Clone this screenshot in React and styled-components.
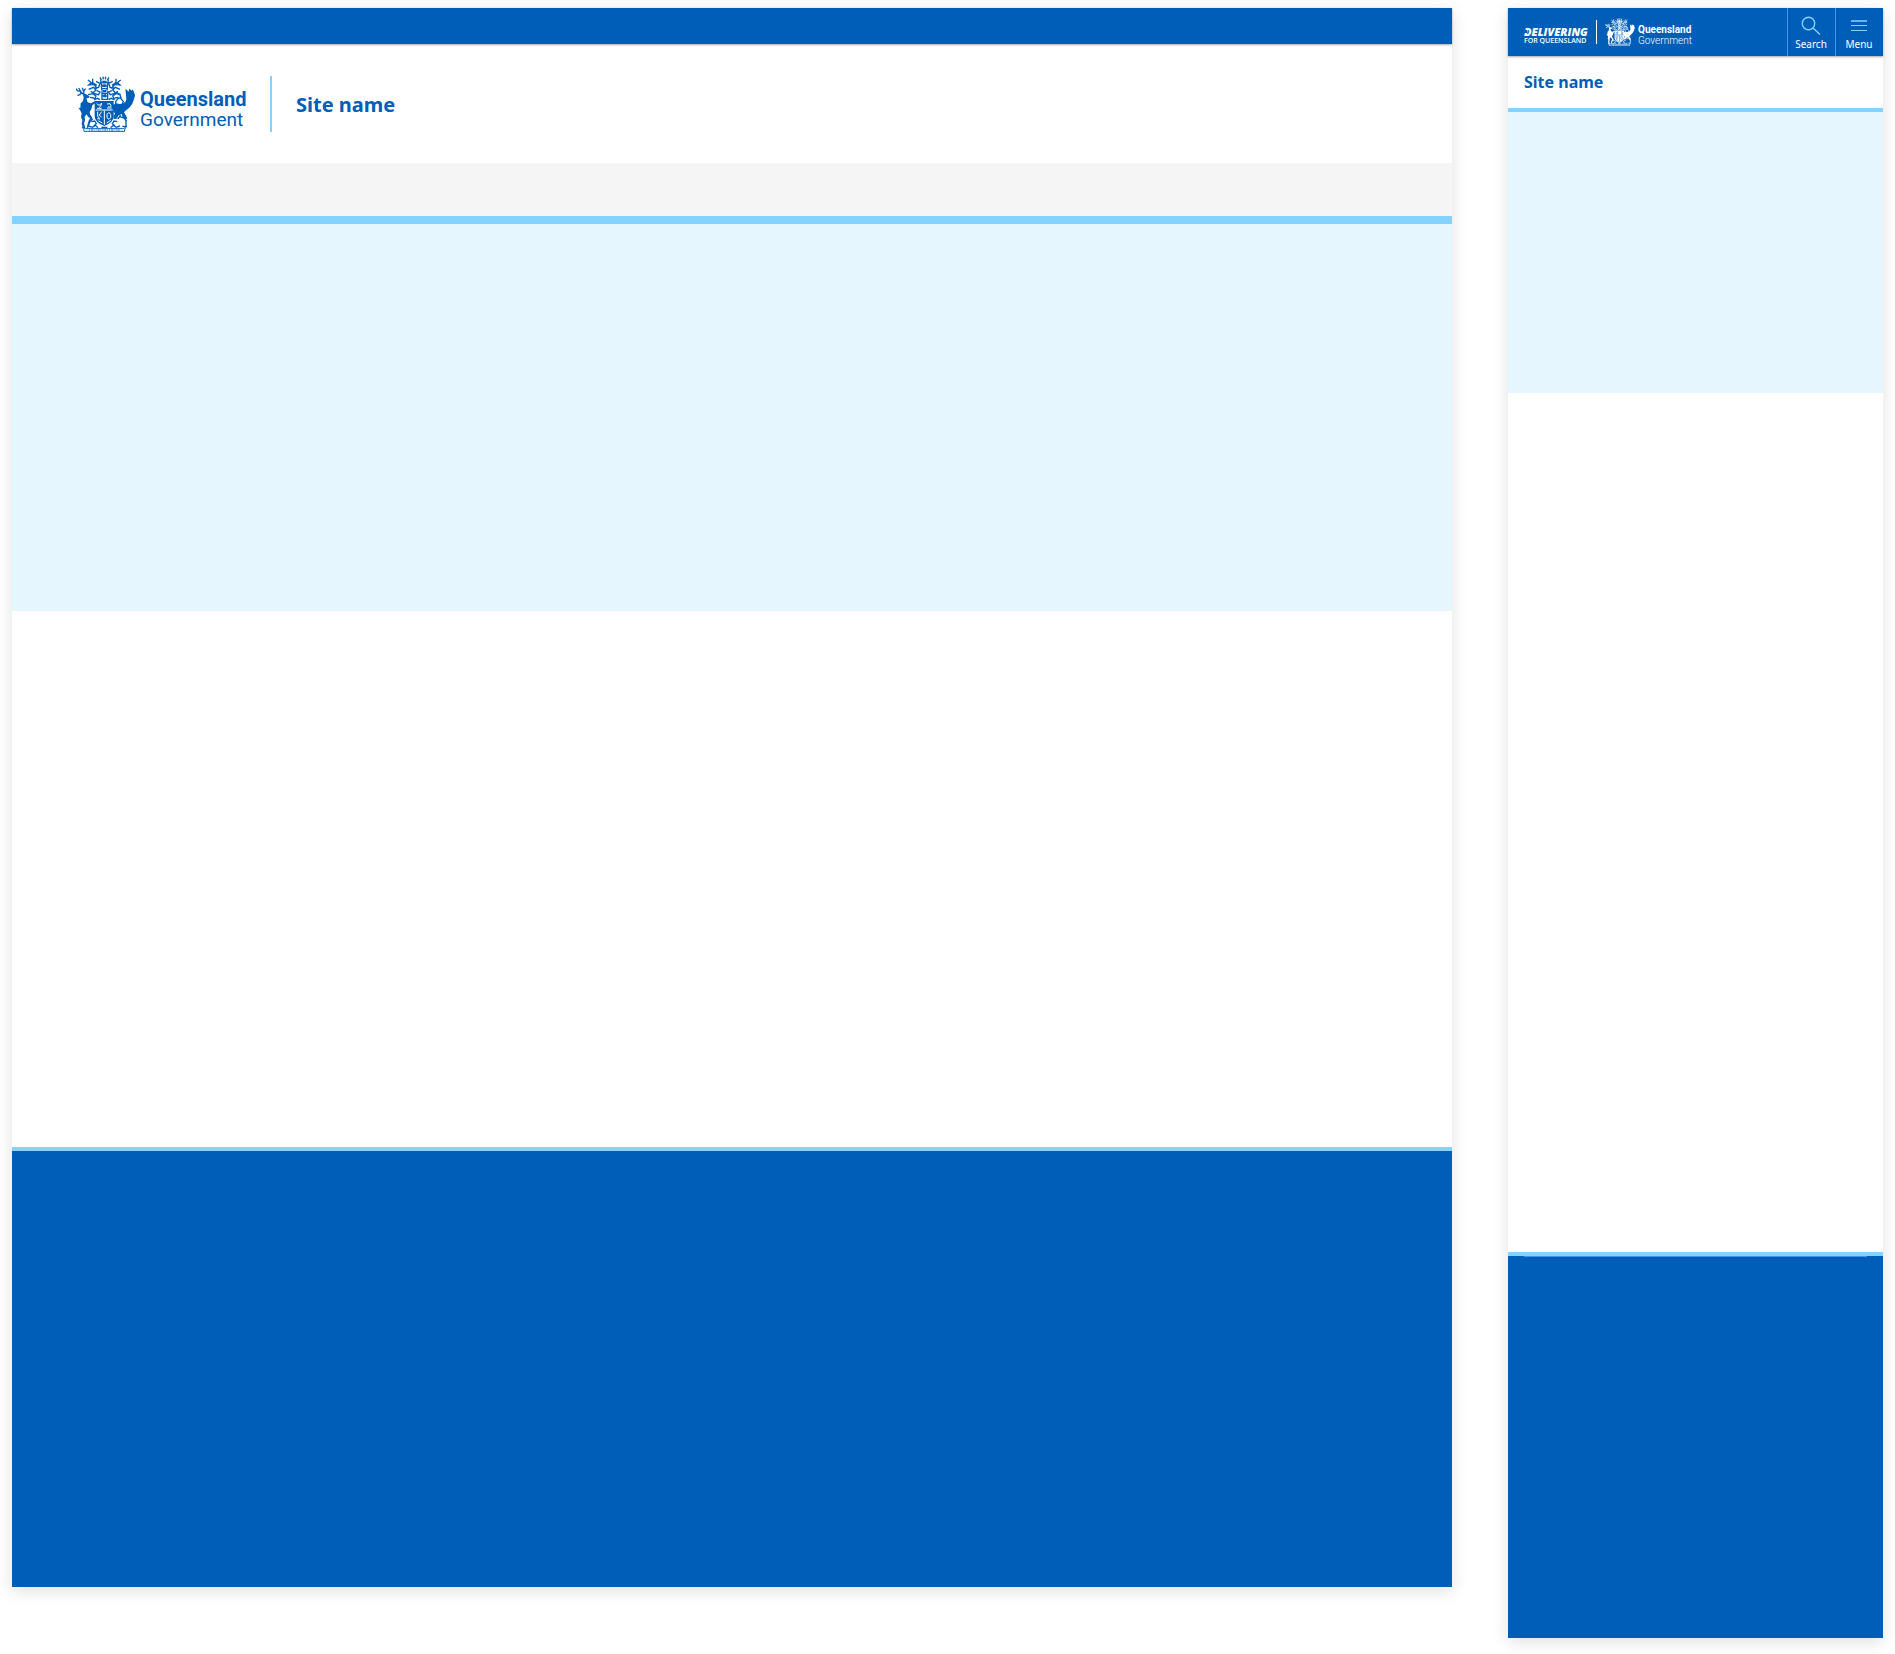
import React from 'react';
import styled, { createGlobalStyle, ThemeProvider } from 'styled-components';

const theme = {
  blue: '#005eb8',
  sky: '#84d3ff',
  tint: '#e5f6ff',
  grey: '#f5f5f5',
  line: '#4094f0',
};

const GlobalStyle = createGlobalStyle`
  * {
    box-sizing: border-box;
  }
  body {
    margin: 0;
    background: #fff;
    font-family: 'Noto Sans', 'Open Sans', sans-serif;
  }
`;

const Board = styled.div`
  display: flex;
  align-items: flex-start;
  gap: 56px;
  padding: 8px 12px 16px;
`;

const Page = styled.section`
  min-width: 0;
  flex: ${({ $mobile }) => ($mobile ? '0 0 375px' : '1 1 0')};
  background: #fff;
  box-shadow: 0 4px 16px rgba(0, 0, 0, 0.12);
`;

const TopBar = styled.div`
  position: relative;
  display: flex;
  height: ${({ $tall }) => ($tall ? '48px' : '36px')};
  background: ${({ theme }) => theme.blue};
  box-shadow: 0 1px 2px rgba(0, 0, 0, 0.35);
`;

const Header = styled.header`
  display: flex;
  align-items: center;
  padding: 32px 64px 31px;
`;

const MobileHeader = styled.header`
  padding: 14px 16px;
`;

const Logo = styled.a`
  display: flex;
  flex: none;
  width: ${({ $small }) => ($small ? '86px' : '170px')};
  color: ${({ $small, theme }) => ($small ? '#fff' : theme.blue)};
  text-decoration: none;
`;

const CrestSvg = styled.svg`
  display: block;
  flex: none;
  width: ${({ $small }) => ($small ? '30px' : '59px')};
  height: ${({ $small }) => ($small ? '28px' : '56px')};
`;

const Wordmark = styled.span`
  display: flex;
  flex-direction: column;
  font-family: Roboto, 'Open Sans', sans-serif;
  font-size: ${({ $small }) => ($small ? '10px' : '20px')};
  line-height: ${({ $small }) => ($small ? '11px' : '21px')};
  padding-top: ${({ $small }) => ($small ? '6px' : '13px')};
  padding-left: ${({ $small }) => ($small ? '3px' : '5px')};
`;

const Strong = styled.strong`
  font-weight: 700;
`;

const Regular = styled.span`
  font-size: ${({ $small }) => ($small ? '10px' : '19px')};
  line-height: ${({ $small }) => ($small ? '11px' : '20px')};
  font-weight: ${({ $small }) => ($small ? 300 : 400)};
`;

const Divider = styled.span`
  flex: none;
  width: ${({ $small }) => ($small ? '1px' : '2px')};
  height: ${({ $small }) => ($small ? '24px' : '56px')};
  margin: ${({ $small }) => ($small ? '0 8px 0 9px' : '0 24px')};
  background: ${({ $small, theme }) => ($small ? '#fff' : theme.sky)};
`;

const SiteName = styled.a`
  display: block;
  padding-top: ${({ $small }) => ($small ? '0' : '2px')};
  color: ${({ theme }) => theme.blue};
  font-size: ${({ $small }) => ($small ? '16px' : '20px')};
  line-height: ${({ $small }) => ($small ? '24px' : '28px')};
  font-weight: 700;
  text-decoration: none;
`;

const NavStrip = styled.nav`
  height: 53px;
  background: ${({ theme }) => theme.grey};
`;

const Banner = styled.div`
  height: ${({ $small }) => ($small ? '285px' : '395px')};
  border-top: ${({ $small }) => ($small ? '4px' : '8px')} solid ${({ theme }) => theme.sky};
  background: ${({ theme }) => theme.tint};
`;

const Content = styled.main`
  min-height: ${({ $small }) => ($small ? '859px' : '536px')};
`;

const Footer = styled.footer`
  height: ${({ $small }) => ($small ? '386px' : '440px')};
  padding: 0 16px;
  border-top: 4px solid ${({ theme }) => theme.sky};
  background: ${({ theme }) => theme.blue};
`;

const FooterRule = styled.hr`
  height: 1px;
  margin: 0;
  border: 0;
  background: ${({ theme }) => theme.line};
`;

const MobileBrand = styled.div`
  display: flex;
  flex: 1;
  align-items: center;
  padding: 0 0 0 16px;
`;

const Tagline = styled.span`
  position: relative;
  display: flex;
  flex-direction: column;
  flex: none;
  width: 63px;
  color: #fff;
  font-family: 'Open Sans', sans-serif;
  font-size: 7px;
  line-height: 8px;
  font-weight: 600;
  white-space: nowrap;
  padding-top: 6px;
`;

const TaglineLead = styled.em`
  font-size: 11px;
  line-height: 11px;
  font-weight: 800;
`;

// the gap in the stem of the D
const Notch = styled.span`
  position: absolute;
  top: 10px;
  left: 0;
  width: 3px;
  height: 3px;
  background: ${({ theme }) => theme.blue};
`;

const BarButton = styled.button`
  display: flex;
  flex-direction: column;
  align-items: center;
  width: 48px;
  padding: 7px 1px 0 0;
  border: 0;
  border-left: 1px solid ${({ theme }) => theme.line};
  background: none;
  color: #fff;
  font-family: inherit;
  font-size: 10px;
  line-height: 14px;
  cursor: pointer;

  svg {
    display: block;
    width: 22px;
    height: 22px;
    color: ${({ theme }) => theme.sky};
  }
`;

const Crest = ({ small }) => (
  <CrestSvg $small={small} viewBox="0 0 177 168" aria-hidden="true" fill="currentColor">
    {/* mantling */}
    <g fill="none" stroke="currentColor" strokeWidth="4">
      <path d="M36 12l10 8-8 7 14-1M50 8v12l12 8M38 40l14-6 8 8-10 10M60 16l12 6-4 12-12 2M36 56l14-3 10 7-5 10M62 44l10 4-6 10M54 72l10-5 8 4M46 20l10 8 8 10M44 46l10 6 12 4M42 64l12 2" />
      <path d="M134 12l-10 8 8 7-14-1M120 8v12l-12 8M132 40l-14-6-8 8 10 10M110 16l-12 6 4 12 12 2M134 56l-14-3-10 7 5 10M108 44l-10 4 6 10M116 72l-10-5-8 4M124 20l-10 8-8 10M126 46l-10 6-12 4M128 64l-12 2" />
      <path d="M76 12l-4-8M82 10l-1-8M88 10l1-8M94 12l5-8M72 20h28M75 30h20M77 38h17" />
      <path d="M74 10l4 34M97 10l-4 34M76 52h20M76 60h20M76 70h20M78 46v26M95 46v26" />
    </g>
    <path d="M78 14h14l-2 8h-10zM79 25h12l-2 8h-8zM80 42h11v7h-11zM82 55h8v9h-8z" />
    {/* stag */}
    <g fill="none" stroke="currentColor" strokeWidth="4">
      <path d="M22 55l-8-9-12-2M14 46l-6-10M4 44l-4-6M24 54l-1-9 6-7M23 47l-4-12M15 48l-3 8-8 2" />
    </g>
    <path d="M20 53l9 1 12 7-3 5-7 1 4 12 10 3 10-6 3 5-9 7-3 12-5 7 1 8 7 10-3 5-9-7-6-8-5 8 1 10-3 9 4 14-7 1-4-14 2-10-4-9 2-12-5-10-5-7 6 1 1-14 7-7 2-11z" />
    <path d="M43 125l9 4-9 10-6 16-5 1 5-20z" />
    {/* crane */}
    <path d="M151 70l-1-13-2-18 5 3 4 6 3-10 7 6 2-4 4 6 4 12-3 12-5 13-9 12-10 8-6 6 10 17-3 4-7-2-7-14-9 4-6 10-9 1-1-8 5-8-5-7-6-10 4-9 11-5 9 2 8-1 10-5z" />
    <g fill="none" stroke="currentColor" strokeWidth="4">
      <path d="M120 89l-1-12 7-9 9-3-4-10-9-5M133 66l9 10-4 12M128 108l5 12-8 9M140 106l1 16M132 122l14 5 4 8v15M146 127l6 9M139 151l14 1" />
    </g>
    {/* shield */}
    <path d="M56 75h57v44q0 20-28.500 31q-28.500-11-28.500-31z" />
    <g fill="none" stroke={small ? '#005eb8' : '#fff'} strokeWidth="3">
      <path d="M59 102h51M85 103v43M62 83l7 5 8-6-3 9-5 4M63 97h14M93 84q12-4 12 4t-8 3M93 96h14M65 107v13l5 7M77 107l-7 10 7 7M64 128l8 1M93 115l6-6 5 6v10l-5 5-6-5zM67 134l12 7M104 133l-12 8" />
    </g>
    {/* compartment and scroll */}
    <path
      d="M38 150l11 4 9-6 8 7M132 150l-11 4-9-6-8 7M46 137l10-2 5 8-8 7M124 137l-10-2-5 8 8 7M76 154h18"
      fill="none"
      stroke="currentColor"
      strokeWidth="4"
    />
    <path d="M18 153l10 5h114l7-4-3 7v5H24l-1-6z" fill="none" stroke="currentColor" strokeWidth="3" />
    <path d="M39 162h92" fill="none" stroke="currentColor" strokeWidth="4" strokeDasharray="3 3 6 2 2 4" opacity=".6" />
  </CrestSvg>
);

const GovernmentLogo = ({ small }) => (
  <Logo href="#" $small={small}>
    <Crest small={small} />
    <Wordmark $small={small}>
      <Strong>Queensland</Strong>
      <Regular $small={small}>Government</Regular>
    </Wordmark>
  </Logo>
);

const SearchIcon = () => (
  <svg viewBox="0 0 22 22" fill="none" stroke="currentColor" strokeWidth="1.400" strokeLinecap="round">
    <circle cx="8.500" cy="8.500" r="6.200" />
    <path d="M13 13l6.500 6" />
  </svg>
);

const MenuIcon = () => (
  <svg viewBox="0 0 22 22" fill="none" stroke="currentColor">
    <path d="M3 6h16" strokeWidth="2" opacity=".75" />
    <path d="M3 10.500h16M3 15.500h16" />
  </svg>
);

const DesktopPage = () => (
  <Page>
    <TopBar />
    <Header>
      <GovernmentLogo />
      <Divider />
      <SiteName href="#">Site name</SiteName>
    </Header>
    <NavStrip />
    <Banner />
    <Content />
    <Footer />
  </Page>
);

const MobilePage = () => (
  <Page $mobile>
    <TopBar $tall>
      <MobileBrand>
        <Tagline>
          <TaglineLead>DELIVERING</TaglineLead>
          FOR QUEENSLAND
          <Notch />
        </Tagline>
        <Divider $small />
        <GovernmentLogo small />
      </MobileBrand>
      <BarButton type="button">
        <SearchIcon />
        Search
      </BarButton>
      <BarButton type="button">
        <MenuIcon />
        Menu
      </BarButton>
    </TopBar>
    <MobileHeader>
      <SiteName href="#" $small>
        Site name
      </SiteName>
    </MobileHeader>
    <Banner $small />
    <Content $small />
    <Footer $small>
      <FooterRule />
    </Footer>
  </Page>
);

export default function App() {
  return (
    <ThemeProvider theme={theme}>
      <GlobalStyle />
      <Board>
        <DesktopPage />
        <MobilePage />
      </Board>
    </ThemeProvider>
  );
}
